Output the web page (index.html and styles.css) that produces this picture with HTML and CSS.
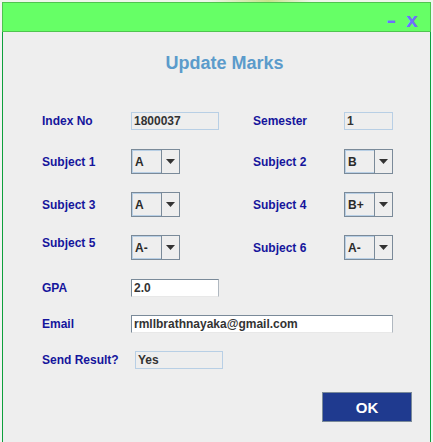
FILE: index.html
```html
<!DOCTYPE html>
<html>
<head>
<meta charset="utf-8">
<link rel="stylesheet" href="styles.css">
</head>
<body>
<div class="desk">
  <div class="window">
    <div class="titlebar"><span class="tb-min">-</span><span class="tb-close">x</span></div>
    <div class="panel">
      <h1 class="heading">Update Marks</h1>

      <div class="row row-text r1">
        <span class="label">Index No</span>
        <div class="field field-ro w88">1800037</div>
        <span class="label">Semester</span>
        <div class="field field-ro w49">1</div>
      </div>

      <div class="row row-combo r2">
        <span class="label">Subject 1</span>
        <div class="combo"><span class="combo-val">A</span><span class="combo-btn"><svg width="9" height="5" viewBox="0 0 9 5"><polygon points="0,0 9,0 4.5,5" fill="#333"/></svg></span></div>
        <span class="label">Subject 2</span>
        <div class="combo"><span class="combo-val">B</span><span class="combo-btn"><svg width="9" height="5" viewBox="0 0 9 5"><polygon points="0,0 9,0 4.5,5" fill="#333"/></svg></span></div>
      </div>

      <div class="row row-combo r3">
        <span class="label">Subject 3</span>
        <div class="combo"><span class="combo-val">A</span><span class="combo-btn"><svg width="9" height="5" viewBox="0 0 9 5"><polygon points="0,0 9,0 4.5,5" fill="#333"/></svg></span></div>
        <span class="label">Subject 4</span>
        <div class="combo"><span class="combo-val">B+</span><span class="combo-btn"><svg width="9" height="5" viewBox="0 0 9 5"><polygon points="0,0 9,0 4.5,5" fill="#333"/></svg></span></div>
      </div>

      <div class="row row-combo r4">
        <span class="label lift">Subject 5</span>
        <div class="combo"><span class="combo-val">A-</span><span class="combo-btn"><svg width="9" height="5" viewBox="0 0 9 5"><polygon points="0,0 9,0 4.5,5" fill="#333"/></svg></span></div>
        <span class="label">Subject 6</span>
        <div class="combo"><span class="combo-val">A-</span><span class="combo-btn"><svg width="9" height="5" viewBox="0 0 9 5"><polygon points="0,0 9,0 4.5,5" fill="#333"/></svg></span></div>
      </div>

      <div class="row row-text r5">
        <span class="label">GPA</span>
        <div class="field field-edit w88">2.0</div>
      </div>

      <div class="row row-text r6">
        <span class="label">Email</span>
        <div class="field field-edit w-email">rmllbrathnayaka@gmail.com</div>
      </div>

      <div class="row row-text r7">
        <span class="label">Send Result?</span>
        <div class="field field-ro w88 shift">Yes</div>
      </div>

      <div class="actions">
        <button class="ok">OK</button>
      </div>
    </div>
  </div>
</div>
</body>
</html>
```

FILE: styles.css
```css
html, body {
  margin: 0;
  padding: 0;
}

body {
  width: 433px;
  height: 442px;
  overflow: hidden;
  background: #f3f3f3;
  font-family: "Liberation Sans", Arial, sans-serif;
}

.desk {
  padding-top: 2px;
  background: linear-gradient(90deg, #eef6ea 0%, #eef6ea 48%, #c6e38a 62%, #eef6ea 72%, #eef6ea 100%) top / 100% 2px no-repeat, #f3f3f3;
}

.window {
  margin-left: 2px;
  width: 429px;
}

.titlebar {
  box-sizing: border-box;
  height: 30px;
  background: #66ff66;
  border: 1px solid #4fc44f;
  display: flex;
  justify-content: flex-end;
  align-items: flex-start;
  padding: 5px 12px 0 0;
  line-height: 23px;
  font-size: 21px;
  font-weight: bold;
  color: #6e6eff;
}

.tb-min {
  margin-right: 11px;
  transform: scaleX(1.4);
}

.panel {
  box-sizing: border-box;
  height: 410px;
  background: #eeeeee;
  border-left: 1px solid #0ea03c;
  border-right: 1px solid #0ea03c;
}

.heading {
  margin: 0;
  padding: 21px 0 0 16px;
  text-align: center;
  font-size: 18px;
  line-height: 21px;
  font-weight: bold;
  color: #5b9bcb;
}

.row {
  display: grid;
  grid-template-columns: 89px 122px 91px 49px;
  align-items: center;
  padding-left: 39px;
}

.row-text { height: 18px; }
.row-combo { height: 25px; }

.r1 { margin-top: 38px; }
.r2 { margin-top: 19px; }
.r3 { margin-top: 18px; }
.r4 { margin-top: 18px; }
.r5 { margin-top: 19px; }
.r6 { margin-top: 18px; }
.r7 { margin-top: 18px; }

.label {
  font-size: 12px;
  font-weight: bold;
  color: #15159c;
  white-space: nowrap;
}

.lift {
  position: relative;
  top: -5px;
}

.field {
  box-sizing: border-box;
  height: 18px;
  padding-left: 2px;
  font-size: 12px;
  line-height: 16px;
  font-weight: bold;
  color: #333333;
  white-space: nowrap;
}

.field-ro {
  background: #eeeeee;
  border: 1px solid #b8cfe5;
}

.field-edit {
  background: #ffffff;
  border: 1px solid #7a8a99;
  border-right-color: #b0b8c0;
  border-bottom-color: #e8e8e8;
}

.w88 { width: 88px; }
.w49 { width: 49px; }
.w-email {
  width: 262px;
  grid-column: 2 / 5;
}

.shift { margin-left: 4px; }

.combo {
  box-sizing: border-box;
  width: 49px;
  height: 25px;
  display: flex;
  border: 1px solid #7a8a99;
  background: #eeeeee;
}

.combo-val {
  box-sizing: border-box;
  width: 29px;
  height: 23px;
  border: 1px solid #b8cfe5;
  border-right: none;
  padding-left: 2px;
  font-size: 12px;
  line-height: 22px;
  font-weight: bold;
  color: #2a2a2a;
}

.combo-btn {
  flex: 1;
  display: flex;
  align-items: center;
  justify-content: center;
  border-left: 1px solid #7a8a99;
}

.combo-btn svg {
  display: block;
  margin-top: -1px;
}

.actions {
  display: flex;
  justify-content: flex-end;
  padding-right: 18px;
  margin-top: 23px;
}

.ok {
  box-sizing: border-box;
  width: 90px;
  height: 30px;
  background: #1f3a8f;
  border: 1px solid #7a8a99;
  color: #ffffff;
  font-family: "Liberation Sans", Arial, sans-serif;
  font-size: 15px;
  font-weight: bold;
  padding: 0;
}
```
